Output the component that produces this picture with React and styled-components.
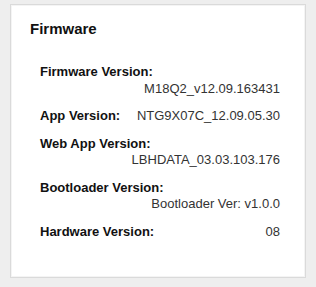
import React from 'react';
import styled, { createGlobalStyle } from 'styled-components';

const GlobalStyle = createGlobalStyle`
  html, body {
    margin: 0;
    padding: 0;
    background: #eeeeee;
    font-family: "Liberation Sans", Arial, sans-serif;
  }
`;

const Page = styled.div`
  padding: 4px 10px 9px 10px;
`;

const Card = styled.section`
  height: 272px;
  background: #ffffff;
  border: 1px solid #dadada;
  box-shadow: inset 0 0 0 1px #f4f4f4;
`;

const Title = styled.h2`
  margin: 0;
  padding: 15px 0 0 19px;
  font-size: 15px;
  line-height: 18px;
  font-weight: bold;
  color: #111;
`;

const List = styled.div`
  padding: 26px 25px 0 29px;
`;

const Row = styled.div`
  display: flex;
  flex-wrap: wrap;
  font-size: 13px;
  line-height: 16.5px;
  margin-bottom: 11px;
`;

const Label = styled.span`
  font-weight: bold;
  color: #111;
`;

const Value = styled.span`
  margin-left: auto;
  color: #333;
`;

const rows = [
  ['Firmware Version:', 'M18Q2_v12.09.163431'],
  ['App Version:', 'NTG9X07C_12.09.05.30'],
  ['Web App Version:', 'LBHDATA_03.03.103.176'],
  ['Bootloader Version:', 'Bootloader Ver: v1.0.0'],
  ['Hardware Version:', '08'],
];

const App = () => {
  return (
    <Page>
      <GlobalStyle />
      <Card>
        <Title>Firmware</Title>
        <List>
          {rows.map(([label, value]) => (
            <Row key={label}>
              <Label>{label}</Label>
              <Value>{value}</Value>
            </Row>
          ))}
        </List>
      </Card>
    </Page>
  );
};

export default App;
